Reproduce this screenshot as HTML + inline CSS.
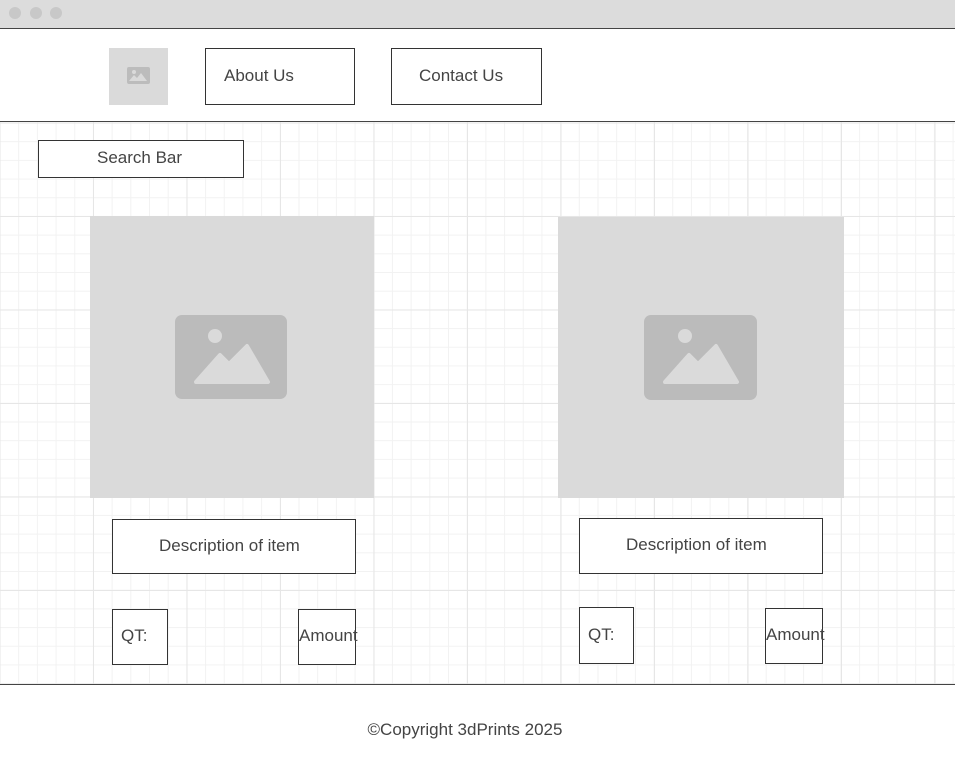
<!DOCTYPE html>
<html><head><style>
*{margin:0;padding:0;box-sizing:border-box}
body{width:955px;height:777px;position:relative;background:#fff;font-family:"Liberation Sans",sans-serif;color:#444;overflow:hidden}
.a{position:absolute}
.box{position:absolute;border:1px solid #333;background:#fff;font-size:17px;display:flex;align-items:center;padding-bottom:2px;white-space:nowrap}
.grid{position:absolute;left:0;top:122px;width:955px;height:562px;
background-image:
linear-gradient(to right,#e6e6e6 1px,transparent 1px),
linear-gradient(to bottom,#e6e6e6 1px,transparent 1px),
linear-gradient(to right,#f2f2f2 1px,transparent 1px),
linear-gradient(to bottom,#f2f2f2 1px,transparent 1px);
background-size:93.5px 93.5px,93.5px 93.5px,18.7px 18.7px,18.7px 18.7px;
background-position:-0.5px 0,0 0.5px,-0.5px 0,0 0.5px}
.dot{position:absolute;top:7px;width:12px;height:12px;border-radius:50%;background:#c8c8c8}
.img{position:absolute;background:#dadada}
</style></head><body>
<div class="a" style="left:0;top:0;width:955px;height:29px;background:#dcdcdc;border-bottom:1px solid #444"></div>
<div class="dot" style="left:9px"></div><div class="dot" style="left:30px"></div><div class="dot" style="left:50px"></div>
<div class="img" style="left:109px;top:48px;width:59px;height:57px">
<svg width="59" height="57"><rect x="18" y="19" width="23" height="17" rx="2" fill="#bcbcbc"/><circle cx="25" cy="24" r="2" fill="#dadada"/><path d="M20 33 L25 27 L28 30 L32 25 L38 33 Z" fill="#dadada"/></svg></div>
<div class="box" style="left:205px;top:48px;width:150px;height:57px;padding-left:18px">About Us</div>
<div class="box" style="left:391px;top:48px;width:151px;height:57px;padding-left:27px">Contact Us</div>
<div class="a" style="left:0;top:121px;width:955px;height:1px;background:#444"></div>
<div class="grid"></div>
<div class="box" style="left:38px;top:140px;width:206px;height:38px;padding-left:58px">Search Bar</div>

<div class="img" style="left:90px;top:216px;width:284px;height:282px">
<svg width="284" height="282"><rect x="85" y="99" width="112" height="84" rx="7" fill="#bbb"/><circle cx="125" cy="120" r="7" fill="#dadada"/><path d="M106 166 L130 139 L139 148 L157 130 L178 166 Z" fill="#dadada" stroke="#dadada" stroke-width="4" stroke-linejoin="round"/></svg></div>
<div class="img" style="left:558px;top:217px;width:286px;height:281px">
<svg width="286" height="281"><rect x="86" y="98" width="113" height="85" rx="7" fill="#bbb"/><circle cx="127" cy="119" r="7" fill="#dadada"/><path d="M107 165 L131 138 L140 147 L158 129 L179 165 Z" fill="#dadada" stroke="#dadada" stroke-width="4" stroke-linejoin="round"/></svg></div>

<div class="box" style="left:112px;top:519px;width:244px;height:55px;padding-left:46px">Description of item</div>
<div class="box" style="left:579px;top:518px;width:244px;height:56px;padding-left:46px">Description of item</div>
<div class="box" style="left:112px;top:609px;width:56px;height:56px;padding-left:8px">QT:</div>
<div class="box" style="left:298px;top:609px;width:58px;height:56px;overflow:visible">Amount</div>
<div class="box" style="left:579px;top:607px;width:55px;height:57px;padding-left:8px">QT:</div>
<div class="box" style="left:765px;top:608px;width:58px;height:56px;overflow:visible">Amount</div>

<div class="a" style="left:0;top:684px;width:955px;height:1px;background:#444"></div>
<div class="a" style="left:0;top:720px;width:930px;text-align:center;font-size:17px">©Copyright 3dPrints 2025</div>
</body></html>
